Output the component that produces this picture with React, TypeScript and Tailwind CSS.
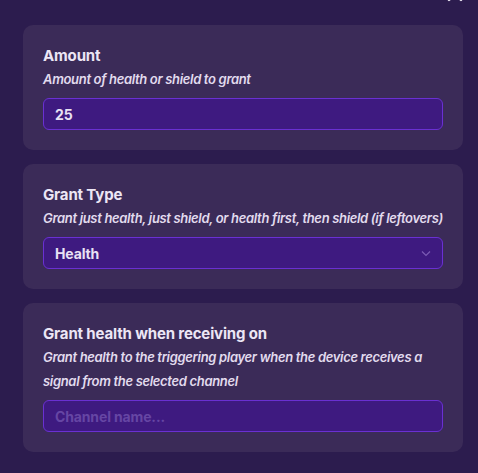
import React from "react";

interface FieldCardProps {
	title: string;
	description: string;
	children: React.ReactNode;
}

const FieldCard = ({ title, description, children }: FieldCardProps) => (
	<div className="bg-[#3b2b58] rounded-[10px] px-5 pt-5 pb-5">
		<p className="text-[15px] leading-[22px] font-bold tracking-[-0.01em] text-[#ece6f5]">{title}</p>
		<p className="text-[13px] leading-[24px] font-semibold italic tracking-[-0.025em] text-[#e2dbee]">
			{description}
		</p>
		<div className="mt-[7px]">{children}</div>
	</div>
);

const inputClass =
	"w-full h-8 rounded-[6px] bg-[#3e1a80] border border-[#6a30d2] px-[11px] text-[14px] font-bold tracking-[-0.01em] text-[#e8e1f4] outline-none placeholder:text-[#6646a4]";

export default function App() {
	return (
		<div
			className="relative w-[478px] h-[473px] overflow-hidden bg-[#2c1c4e] pl-[23px] pt-[25px]"
			style={{ fontFamily: "Inter, 'Noto Sans', sans-serif" }}
		>
			{/* close button, mostly scrolled out of view */}
			<svg
				className="absolute right-[15px] top-[-14px]"
				width="16"
				height="16"
				viewBox="0 0 16 16"
				fill="none"
				stroke="#eeeaf5"
				strokeWidth="2.4"
				strokeLinecap="round"
			>
				<path d="M2 2 L14 14 M14 2 L2 14" />
			</svg>

			<div className="w-[440px] flex flex-col gap-[14px]">
				<FieldCard title="Amount" description="Amount of health or shield to grant">
					<input className={inputClass} defaultValue="25" />
				</FieldCard>

				<FieldCard
					title="Grant Type"
					description="Grant just health, just shield, or health first, then shield (if leftovers)"
				>
					<div className={`${inputClass} flex items-center justify-between pr-[11px]`}>
						<span>Health</span>
						<svg width="10" height="7" viewBox="0 0 10 7" fill="none" stroke="#7b5bb3" strokeWidth="1.2">
							<path d="M1 1.5 L5 5.5 L9 1.5" />
						</svg>
					</div>
				</FieldCard>

				<FieldCard
					title="Grant health when receiving on"
					description="Grant health to the triggering player when the device receives a signal from the selected channel"
				>
					<input className={inputClass} placeholder="Channel name..." />
				</FieldCard>
			</div>
		</div>
	);
}
